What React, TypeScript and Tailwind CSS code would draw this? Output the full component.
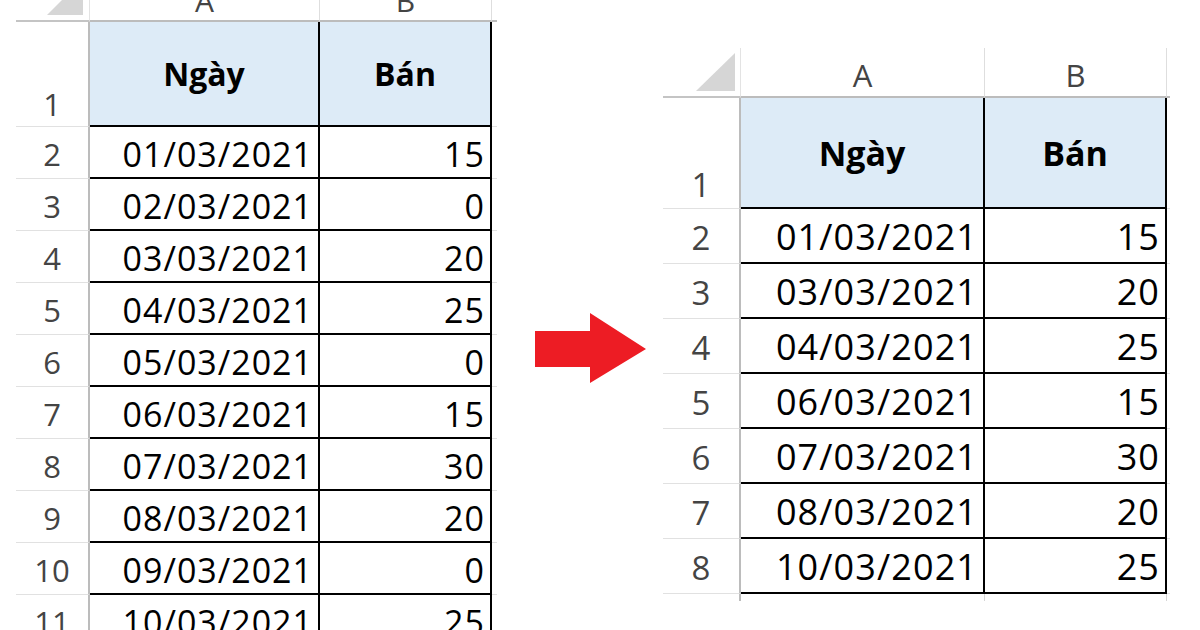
import React from "react";

type Row = [string, string, string];

const before: Row[] = [
  ["2", "01/03/2021", "15"],
  ["3", "02/03/2021", "0"],
  ["4", "03/03/2021", "20"],
  ["5", "04/03/2021", "25"],
  ["6", "05/03/2021", "0"],
  ["7", "06/03/2021", "15"],
  ["8", "07/03/2021", "30"],
  ["9", "08/03/2021", "20"],
  ["10", "09/03/2021", "0"],
  ["11", "10/03/2021", "25"],
];

const after: Row[] = [
  ["2", "01/03/2021", "15"],
  ["3", "03/03/2021", "20"],
  ["4", "04/03/2021", "25"],
  ["5", "06/03/2021", "15"],
  ["6", "07/03/2021", "30"],
  ["7", "08/03/2021", "20"],
  ["8", "10/03/2021", "25"],
];

const small = {
  grid: "grid-cols-[74px_230px_172px_5px] grid-rows-[22px_105px_repeat(10,52px)]",
  letter: "text-[30px] pb-[4px]",
  num: "text-[31px]",
  one: "pb-[6px]",
  head: "text-[32px]",
  data: "text-[34px] tracking-[1px]",
  tri: "w-[36px] h-[36px] mr-[6px] mb-[5px]",
};

const big = {
  grid: "grid-cols-[78px_244px_182px_3px] grid-rows-[50px_111px_repeat(7,55px)_7px]",
  letter: "text-[31px] pb-[5px]",
  num: "text-[33px]",
  one: "pb-[7px]",
  head: "text-[34px]",
  data: "text-[36px] tracking-[1.1px]",
  tri: "w-[39px] h-[38px] mr-[5px] mb-[5px]",
};

const rowHead = "flex items-center justify-center border-r-2 border-b border-r-[#bcbcbc] border-b-[#e1e1e1] text-[#444]";
const cell = "flex items-center justify-end pr-[5px] pt-[3px] border-r-2 border-b-2 border-black text-black overflow-hidden";
const tail = "border-b border-b-[#e1e1e1]";

const Sheet = ({ rows, s, stub }: { rows: Row[]; s: typeof small; stub?: boolean }) => (
  <div className={`grid leading-none ${s.grid}`}>
    {/* column header row */}
    <div className="flex items-end justify-end overflow-hidden border-r border-b-2 border-r-[#e3e3e3] border-b-[#c4c4c4]">
      <svg viewBox="0 0 40 40" preserveAspectRatio="none" className={`shrink-0 ${s.tri}`}>
        <polygon points="40,0 40,40 0,40" fill="#d6d6d6" />
      </svg>
    </div>
    {["A", "B"].map((c) => (
      <div
        key={c}
        className={`flex items-end justify-center overflow-hidden border-r border-b-2 border-r-[#dedede] border-b-[#bcbcbc] text-[#444] ${s.letter}`}
      >
        {c}
      </div>
    ))}
    <div className="border-b-2 border-b-[#bcbcbc]" />

    {/* row 1: headings */}
    <div className={`flex items-end justify-center border-r-2 border-b border-r-[#bcbcbc] border-b-[#e1e1e1] text-[#444] ${s.num} ${s.one}`}>
      1
    </div>
    <div className={`flex items-center justify-center bg-[#ddebf7] border-r-2 border-b-2 border-black font-bold text-black ${s.head}`}>
      Ngày
    </div>
    <div className={`flex items-center justify-center bg-[#ddebf7] border-r-2 border-b-2 border-black font-bold text-black ${s.head}`}>
      Bán
    </div>
    <div className={tail} />

    {rows.map(([n, d, v]) => (
      <React.Fragment key={n}>
        <div className={`${rowHead} pt-[3px] ${s.num}`}>{n}</div>
        <div className={`${cell} ${s.data}`}>{d}</div>
        <div className={`${cell} ${s.data}`}>{v}</div>
        <div className={tail} />
      </React.Fragment>
    ))}

    {stub && (
      <>
        <div className="border-r-2 border-r-[#bcbcbc]" />
        <div className="border-r border-r-[#d6d6d6]" />
        <div className="border-r border-r-[#d6d6d6]" />
        <div />
      </>
    )}
  </div>
);

export default function App() {
  return (
    <div className="w-[1200px] h-[630px] overflow-hidden bg-white flex items-start font-['Open_Sans',sans-serif]">
      <div className="ml-[16px]">
        <Sheet rows={before} s={small} />
      </div>

      <div className="w-[166px] shrink-0 pl-[38px] pt-[313px]">
        <svg width="111" height="70" viewBox="0 0 111 70">
          <polygon points="0,18 55,18 55,0 111,36 55,70 55,54 0,54" fill="#ed1c24" />
        </svg>
      </div>

      <div className="mt-[48px]">
        <Sheet rows={after} s={big} stub />
      </div>
    </div>
  );
}
